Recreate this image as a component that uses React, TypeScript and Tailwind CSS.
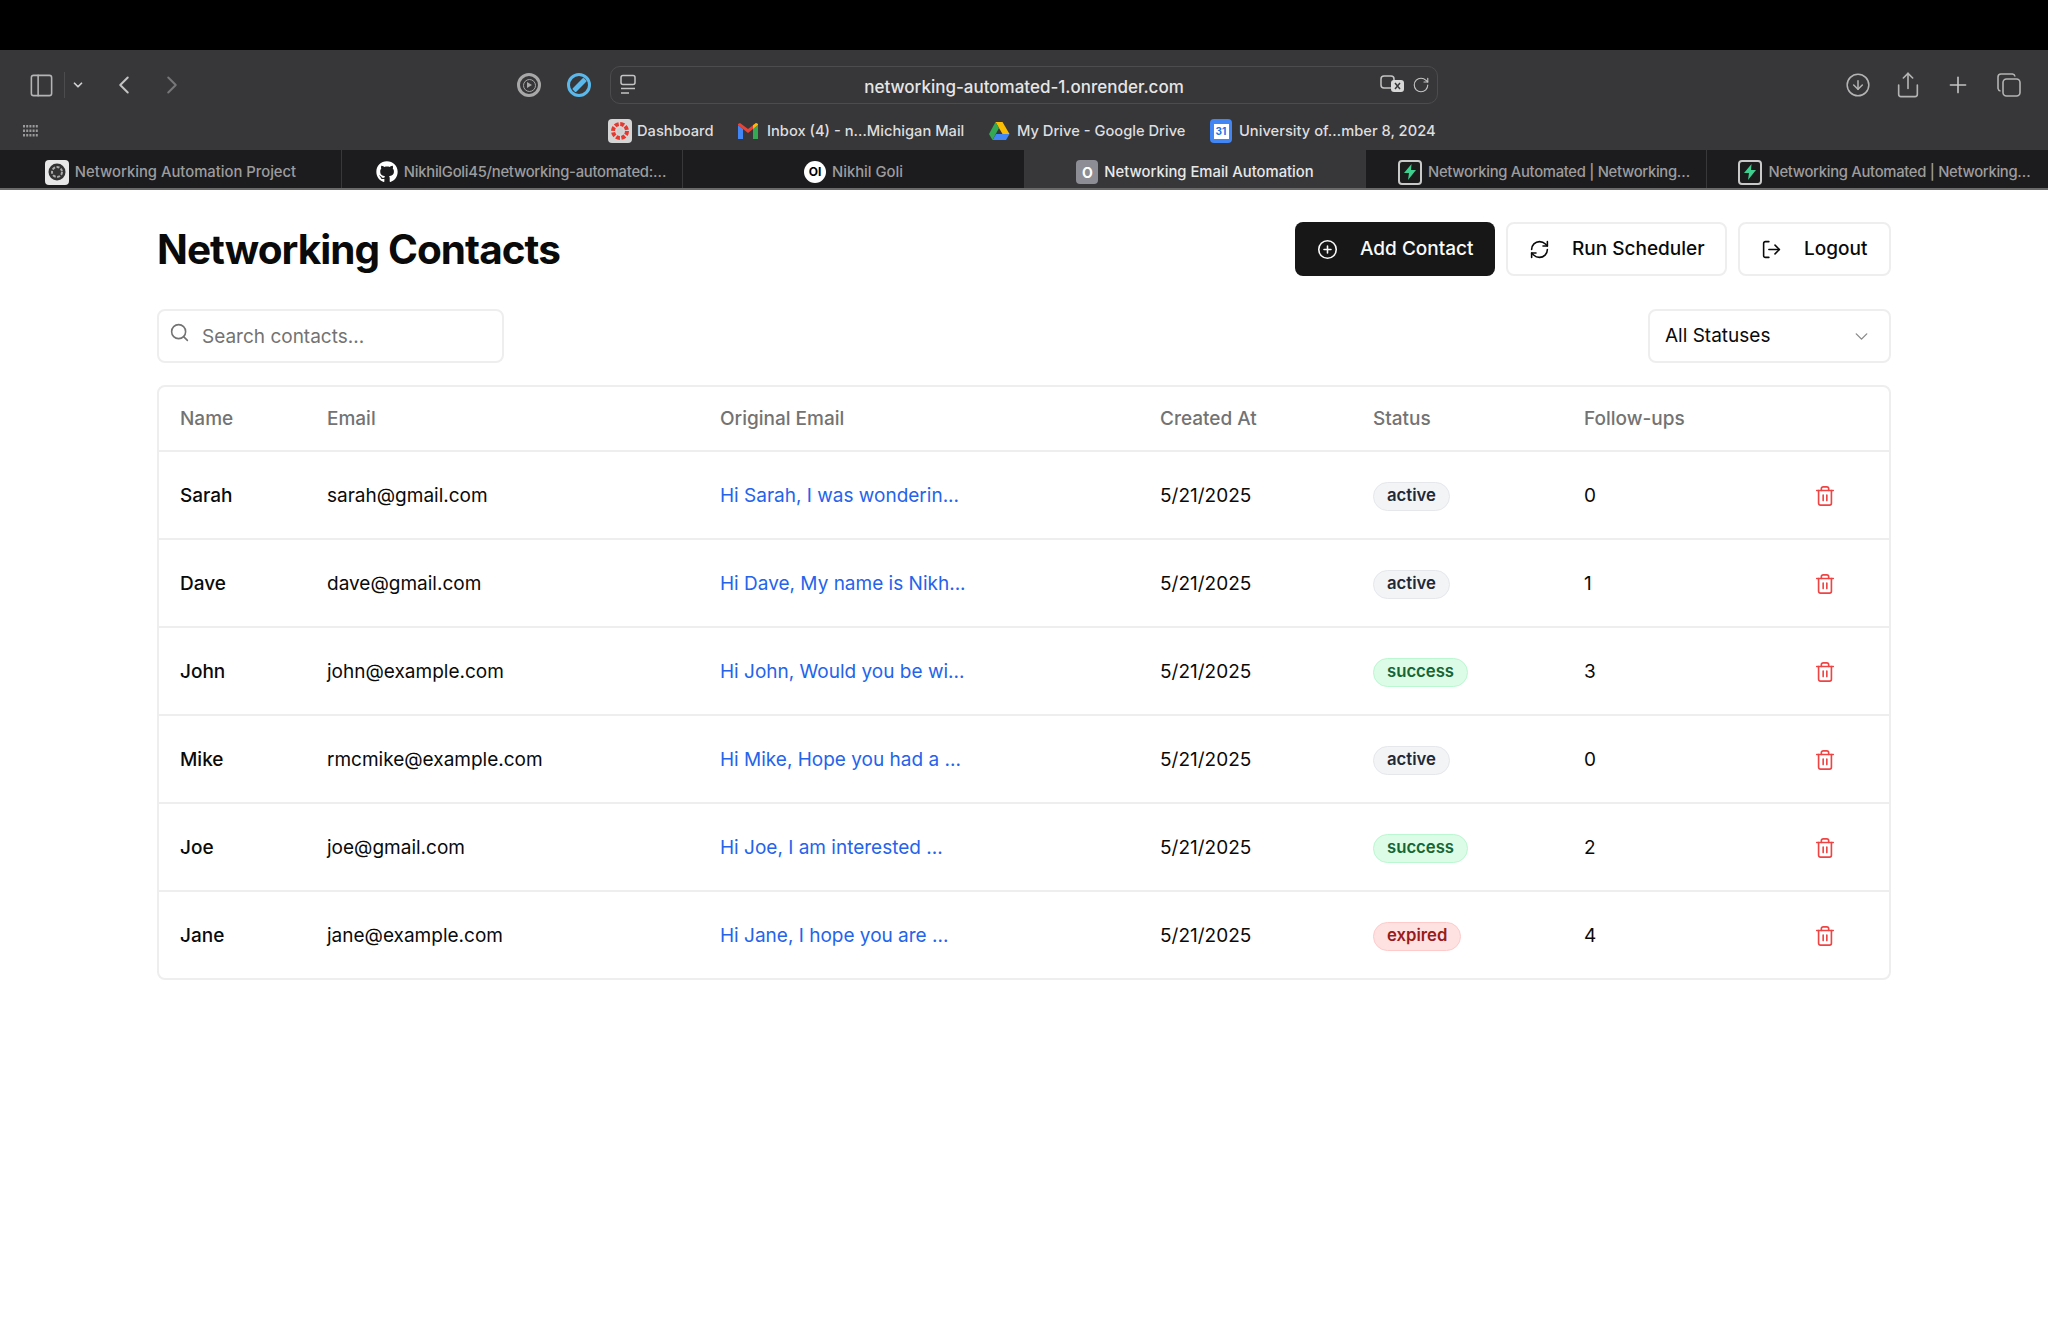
import React from "react";
import { CirclePlus, RefreshCw, LogOut, Search, ChevronDown, Trash2, PanelLeft, ChevronLeft, ChevronRight, Share, Plus, CircleArrowDown, RotateCw } from "lucide-react";
import { FaGithub } from "react-icons/fa";

const Bolt = () => (
  <span className="w-[24px] h-[25px] rounded-[4px] border-2 border-[#c9c9c9] bg-[#1c1c1c] flex items-center justify-center shrink-0">
    <svg width="14" height="16" viewBox="0 0 14 16"><path d="M8.5 0 1 9h5l-1 7 8-10H8z" fill="#3ecf8e" /></svg>
  </span>
);

const tabs = [
  { t: "Networking Automation Project", c: "", icon: <span className="w-[24px] h-[25px] rounded-[4px] bg-[#e8e8e8] flex items-center justify-center shrink-0"><svg width="18" height="18" viewBox="0 0 18 18"><circle cx="9" cy="9" r="8.5" fill="#333" /><circle cx="9" cy="9" r="5" fill="none" stroke="#aaa" strokeWidth="2" strokeDasharray="3 1.5" /></svg></span> },
  { t: "NikhilGoli45/networking-automated:…", c: "pl-[18px] tracking-[-0.26px]", icon: <FaGithub className="w-[22px] h-[22px] text-white shrink-0" /> },
  { t: "Nikhil Goli", c: "", icon: <span className="w-[22px] h-[22px] rounded-full bg-white text-black text-[12px] font-bold flex items-center justify-center shrink-0">OI</span> },
  { t: "Networking Email Automation", c: "", active: true, icon: <span className="w-[22px] h-[24px] rounded-[4px] bg-[#8d8d96] text-white text-[14px] font-bold flex items-center justify-center shrink-0">O</span> },
  { t: "Networking Automated | Networking…", c: "pl-[16px] tracking-[-0.3px]", icon: <Bolt /> },
  { t: "Networking Automated | Networking…", c: "pl-[14px] tracking-[-0.3px]", icon: <Bolt /> },
];

const bookmarks = [
  { t: "Dashboard", w: "w-[129px]", g: "gap-[5px]", icon: <span className="w-[24px] h-[24px] rounded-[4px] bg-[#d5d5d5] flex items-center justify-center shrink-0"><svg width="20" height="20" viewBox="0 0 20 20"><circle cx="10" cy="10" r="7" fill="none" stroke="#e5392f" strokeWidth="4" strokeDasharray="4 1.5" /><circle cx="10" cy="10" r="3" fill="#cfcfcf" /></svg></span> },
  { t: "Inbox (4) - n…Michigan Mail", w: "w-[251px]", g: "gap-[8px]", icon: <svg width="22" height="18" viewBox="0 0 22 18" className="shrink-0"><path d="M1 17V3l5 4v10z" fill="#4285f4" /><path d="M21 17V3l-5 4v10z" fill="#34a853" /><path d="M1 3 11 11 21 3v-1l-2-1-8 6L3 1 1 2z" fill="#ea4335" /><path d="M16 7l5-4v-1l-2-1-3 2.300z" fill="#fbbc04" /></svg> },
  { t: "My Drive - Google Drive", w: "w-[222px]", g: "gap-[7px]", icon: <svg width="22" height="20" viewBox="0 0 22 20" className="shrink-0"><path d="M7.500 1h7l7 12h-7z" fill="#fbbc04" /><path d="M7.500 1 1 13l3.500 6L11 7z" fill="#34a853" /><path d="M4.500 19h13.500l3.500-6H8z" fill="#4285f4" /></svg> },
  { t: "University of…mber 8, 2024", w: "w-[220px]", g: "gap-[7px]", icon: <span className="w-[22px] h-[24px] rounded-[4px] bg-[#4285f4] flex items-center justify-center shrink-0"><span className="w-[15px] h-[15px] bg-white text-[#1a73e8] text-[10px] font-bold leading-[15px] text-center">31</span></span> },
];

const rows = [
  { n: "Sarah", e: "sarah@gmail.com", o: "Hi Sarah, I was wonderin...", s: "active", f: 0 },
  { n: "Dave", e: "dave@gmail.com", o: "Hi Dave, My name is Nikh...", s: "active", f: 1 },
  { n: "John", e: "john@example.com", o: "Hi John, Would you be wi...", s: "success", f: 3 },
  { n: "Mike", e: "rmcmike@example.com", o: "Hi Mike, Hope you had a ...", s: "active", f: 0 },
  { n: "Joe", e: "joe@gmail.com", o: "Hi Joe, I am interested ...", s: "success", f: 2 },
  { n: "Jane", e: "jane@example.com", o: "Hi Jane, I hope you are ...", s: "expired", f: 4 },
];

const badge: Record<string, string> = {
  active: "bg-[#f3f4f6] text-[#1f2937] border-[#e5e7eb]",
  success: "bg-[#dcfce7] text-[#166534] border-[#bbf7d0]",
  expired: "bg-[#fee2e2] text-[#991b1b] border-[#fecaca]",
};

const cols = "grid grid-cols-[147px_393px_440px_213px_211px_1fr] items-center";

export default function App() {
  return (
    <div className="min-h-[1330px] bg-white font-['Inter',sans-serif] text-[#0a0a0a]">
      <div className="h-[50px] bg-black" />
      <header className="bg-[#37373a] h-[100px] flex flex-col text-[#d6d6d6]">
        <div className="h-[62px] pt-[8px] flex items-center relative">
          <PanelLeft className="ml-[27px] w-[29px] h-[27px] text-[#b4b4b4]" strokeWidth={1.4} />
          <span className="ml-[8px] w-px h-[26px] bg-[#4c4c4f]" />
          <ChevronDown className="ml-[6px] w-[14px] h-[14px] text-[#d0d0d0]" strokeWidth={3} />
          <ChevronLeft className="ml-[24px] w-[30px] h-[30px] text-[#c4c4c4]" strokeWidth={1.6} />
          <ChevronRight className="ml-[18px] w-[30px] h-[30px] text-[#77777a]" strokeWidth={1.6} />
          <span className="ml-[330px] w-[24px] h-[24px] rounded-full border-[3px] border-[#a8a8a8] flex items-center justify-center shrink-0">
            <span className="w-[13px] h-[13px] rounded-full border border-[#a8a8a8] flex items-center justify-center"><span className="w-0 h-0 border-y-[3px] border-y-transparent border-l-[5px] border-l-[#a8a8a8]" /></span>
          </span>
          <span className="ml-[26px] w-[24px] h-[24px] rounded-full border-[3px] border-[#5ab8ea] flex items-center justify-center shrink-0">
            <span className="w-[5px] h-[16px] bg-[#5ab8ea] rotate-45 rounded-[1px]" />
          </span>
          <div className="ml-[19px] w-[828px] h-[38px] rounded-[10px] border border-[#4c4c4f] flex items-center relative shrink-0">
            <svg width="18" height="22" viewBox="0 0 18 22" className="ml-[8px]" fill="none" stroke="#c4c4c4" strokeWidth="1.500"><rect x="2" y="1.500" width="14" height="9" rx="2" /><path d="M2 14.500h14M2 19h8" /></svg>
            <span className="absolute inset-x-0 top-[1px] text-center text-[17px] font-medium text-[#e6e6e6] leading-[38px]">networking-automated-1.onrender.com</span>
            <svg width="26" height="22" viewBox="0 0 26 22" className="absolute right-[31px] top-[7px]" fill="none"><rect x="1" y="2" width="13" height="12" rx="3" stroke="#c4c4c4" strokeWidth="1.500" /><rect x="11" y="6" width="13" height="12" rx="3" fill="#d8d8d8" /><path d="M15 9l5 6M20 9l-5 6" stroke="#37373a" strokeWidth="1.500" /></svg>
            <RotateCw className="absolute right-[7px] top-[9px] w-[18px] h-[18px] text-[#c4c4c4]" strokeWidth={1.5} />
          </div>
          <CircleArrowDown className="ml-[407px] w-[26px] h-[26px] text-[#b4b4b4]" strokeWidth={1.4} />
          <Share className="ml-[23px] w-[28px] h-[28px] text-[#b4b4b4]" strokeWidth={1.4} />
          <Plus className="ml-[23px] w-[26px] h-[26px] text-[#c4c4c4]" strokeWidth={1.5} />
          <svg width="26" height="26" viewBox="0 0 26 26" className="ml-[25px]" fill="none" stroke="#b4b4b4" strokeWidth="1.600"><rect x="7" y="7" width="17" height="17" rx="3.500" /><path d="M19 4.500A3 3 0 0 0 16.500 2H5A3 3 0 0 0 2 5v11.500A3 3 0 0 0 4.500 19" /></svg>
        </div>
        <div className="h-[38px] flex items-center">
          <svg width="16" height="14" viewBox="0 0 16 14" className="ml-[23px] shrink-0" fill="#9a9a9a">
            {[0, 1, 2].flatMap((r) => [0, 1, 2, 3, 4].map((c) => <rect key={`${r}-${c}`} x={c * 3.2} y={r * 4.5 + 1} width="2" height="2.500" />))}
          </svg>
          <div className="ml-[569px] flex items-center">
            {bookmarks.map((b) => (
              <div key={b.t} className={`${b.w} ${b.g} flex items-center text-[14.7px] font-medium text-[#dedede] whitespace-nowrap`}>
                {b.icon}
                <span>{b.t}</span>
              </div>
            ))}
          </div>
        </div>
      </header>
      <nav className="grid grid-cols-[342px_341px_342px_341px_341px_1fr] h-[40px] bg-[#1c1c1e] border-b-2 border-[#6a6a6a]">
        {tabs.map((t, i) => (
          <div key={i} className={`flex items-center justify-center gap-[6px] pt-[6px] text-[14.8px] font-medium whitespace-nowrap border-r border-[#38383a] last:border-r-0 ${t.c} ${t.active ? "bg-[#37373a] text-[#e8e8e8]" : "text-[#9c9c9e]"}`}>
            {t.icon}
            <span>{t.t}</span>
          </div>
        ))}
      </nav>
      <main className="pt-[32px] px-[157px] w-[2048px]">
        <div className="h-[54px] flex items-center justify-between">
          <h1 className="pt-[2px] text-[40.5px] font-bold tracking-[-0.95px] leading-[54px]">Networking Contacts</h1>
          <div className="flex gap-[11px] text-[19px] font-medium">
            <button className="h-[54px] w-[200px] rounded-[8px] bg-[#171717] text-[#fafafa] flex items-center pl-[22px] gap-[22px]">
              <CirclePlus className="w-[21px] h-[21px]" strokeWidth={1.8} />Add Contact
            </button>
            <button className="h-[54px] w-[221px] rounded-[8px] bg-white border-2 border-[#eeeeee] flex items-center pl-[21px] gap-[22px]">
              <RefreshCw className="w-[21px] h-[21px]" strokeWidth={1.8} />Run Scheduler
            </button>
            <button className="h-[54px] w-[153px] rounded-[8px] bg-white border-2 border-[#eeeeee] flex items-center pl-[21px] gap-[22px]">
              <LogOut className="w-[21px] h-[21px]" strokeWidth={1.8} />Logout
            </button>
          </div>
        </div>
        <div className="mt-[33px] flex items-center justify-between">
          <div className="relative w-[347px] h-[54px]">
            <Search className="absolute left-[12px] top-[13px] w-[21px] h-[21px] text-[#737373]" strokeWidth={1.8} />
            <input placeholder="Search contacts..." className="w-full h-full rounded-[8px] border-2 border-[#eeeeee] pl-[43px] text-[19px] outline-none placeholder:text-[#737373]" />
          </div>
          <div className="w-[243px] h-[54px] rounded-[8px] border-2 border-[#eeeeee] flex items-center justify-between pl-[15px] pr-[17px] text-[19px]">
            All Statuses
            <ChevronDown className="w-[21px] h-[21px] text-[#8a8a8a]" strokeWidth={1.6} />
          </div>
        </div>
        <div className="mt-[22px] rounded-[8px] border-2 border-[#eeeeee] text-[19px]">
          <div className={`${cols} h-[63px] pt-[2px] font-medium text-[#737373]`}>
            {["Name", "Email", "Original Email", "Created At", "Status", "Follow-ups"].map((h) => (
              <div key={h} className="pl-[21px]">{h}</div>
            ))}
          </div>
          {rows.map((r) => (
            <div key={r.n} className={`${cols} h-[88px] pt-[2px] border-t-2 border-[#eeeeee]`}>
              <div className="pl-[21px] font-medium">{r.n}</div>
              <div className="pl-[21px]">{r.e}</div>
              <div className="pl-[21px] text-[#2563eb]">{r.o}</div>
              <div className="pl-[21px]">5/21/2025</div>
              <div className="pl-[21px] flex">
                <span className={`inline-flex items-center h-[29px] px-[13px] rounded-full border text-[16.7px] font-semibold ${badge[r.s]}`}>{r.s}</span>
              </div>
              <div className="pl-[21px] flex items-center justify-between pr-[53px]">
                <span>{r.f}</span>
                <Trash2 className="w-[22px] h-[22px] text-[#ef4444]" strokeWidth={1.8} />
              </div>
            </div>
          ))}
        </div>
      </main>
    </div>
  );
}
